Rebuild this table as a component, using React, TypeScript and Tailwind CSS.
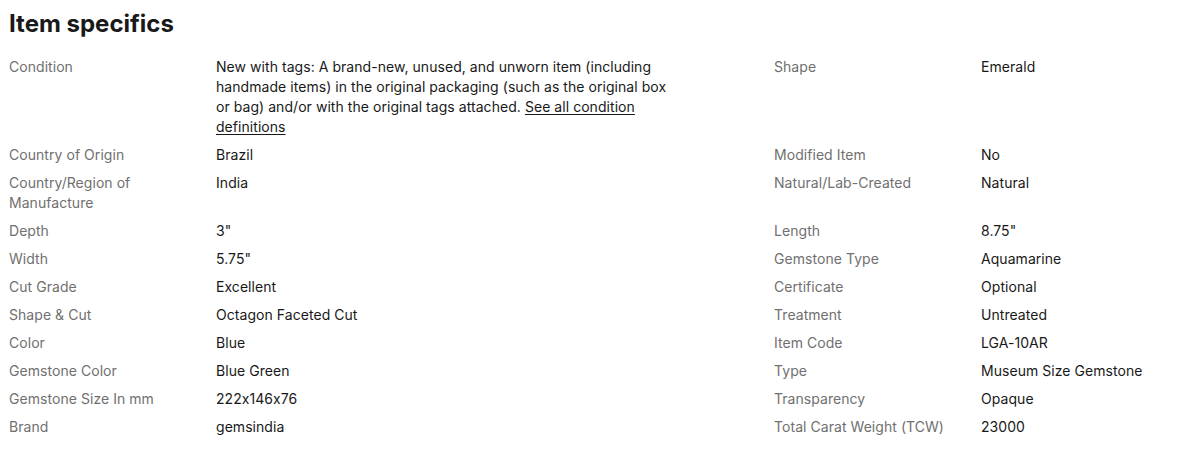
import React from "react";

type Spec = { label: string; value: React.ReactNode };

const rows: [Spec, Spec][] = [
  [
    {
      label: "Condition",
      value: (
        <>
          New with tags: A brand-new, unused, and unworn item (including handmade items) in the original
          packaging (such as the original box or bag) and/or with the original tags attached.{" "}
          <a href="#" className="underline underline-offset-2">
            See all condition definitions
          </a>
        </>
      ),
    },
    { label: "Shape", value: "Emerald" },
  ],
  [
    { label: "Country of Origin", value: "Brazil" },
    { label: "Modified Item", value: "No" },
  ],
  [
    { label: "Country/Region of Manufacture", value: "India" },
    { label: "Natural/Lab-Created", value: "Natural" },
  ],
  [
    { label: "Depth", value: '3"' },
    { label: "Length", value: '8.75"' },
  ],
  [
    { label: "Width", value: '5.75"' },
    { label: "Gemstone Type", value: "Aquamarine" },
  ],
  [
    { label: "Cut Grade", value: "Excellent" },
    { label: "Certificate", value: "Optional" },
  ],
  [
    { label: "Shape & Cut", value: "Octagon Faceted Cut" },
    { label: "Treatment", value: "Untreated" },
  ],
  [
    { label: "Color", value: "Blue" },
    { label: "Item Code", value: "LGA-10AR" },
  ],
  [
    { label: "Gemstone Color", value: "Blue Green" },
    { label: "Type", value: "Museum Size Gemstone" },
  ],
  [
    { label: "Gemstone Size In mm", value: "222x146x76" },
    { label: "Transparency", value: "Opaque" },
  ],
  [
    { label: "Brand", value: "gemsindia" },
    { label: "Total Carat Weight (TCW)", value: "23000" },
  ],
];

export default function App() {
  return (
    <div
      className="w-[1204px] h-[454px] overflow-hidden bg-white pl-[9px] pt-2 text-[#191919] [font-feature-settings:'calt'_0]"
      style={{ fontFamily: "Inter, 'Noto Sans', Arial, sans-serif" }}
    >
      <h2 className="text-[24px] leading-8 font-bold">Item specifics</h2>

      <div className="mt-[17px] flex flex-col gap-2">
        {rows.map(([left, right], i) => (
          <div
            key={i}
            className="grid grid-cols-[207px_558px_207px_1fr] text-[14px] leading-5 tracking-[0.05px]"
          >
            <div className="pr-4 text-[#707070]">{left.label}</div>
            <div className="pr-[100px]">{left.value}</div>
            <div className="pr-4 text-[#707070]">{right.label}</div>
            <div>{right.value}</div>
          </div>
        ))}
      </div>
    </div>
  );
}
